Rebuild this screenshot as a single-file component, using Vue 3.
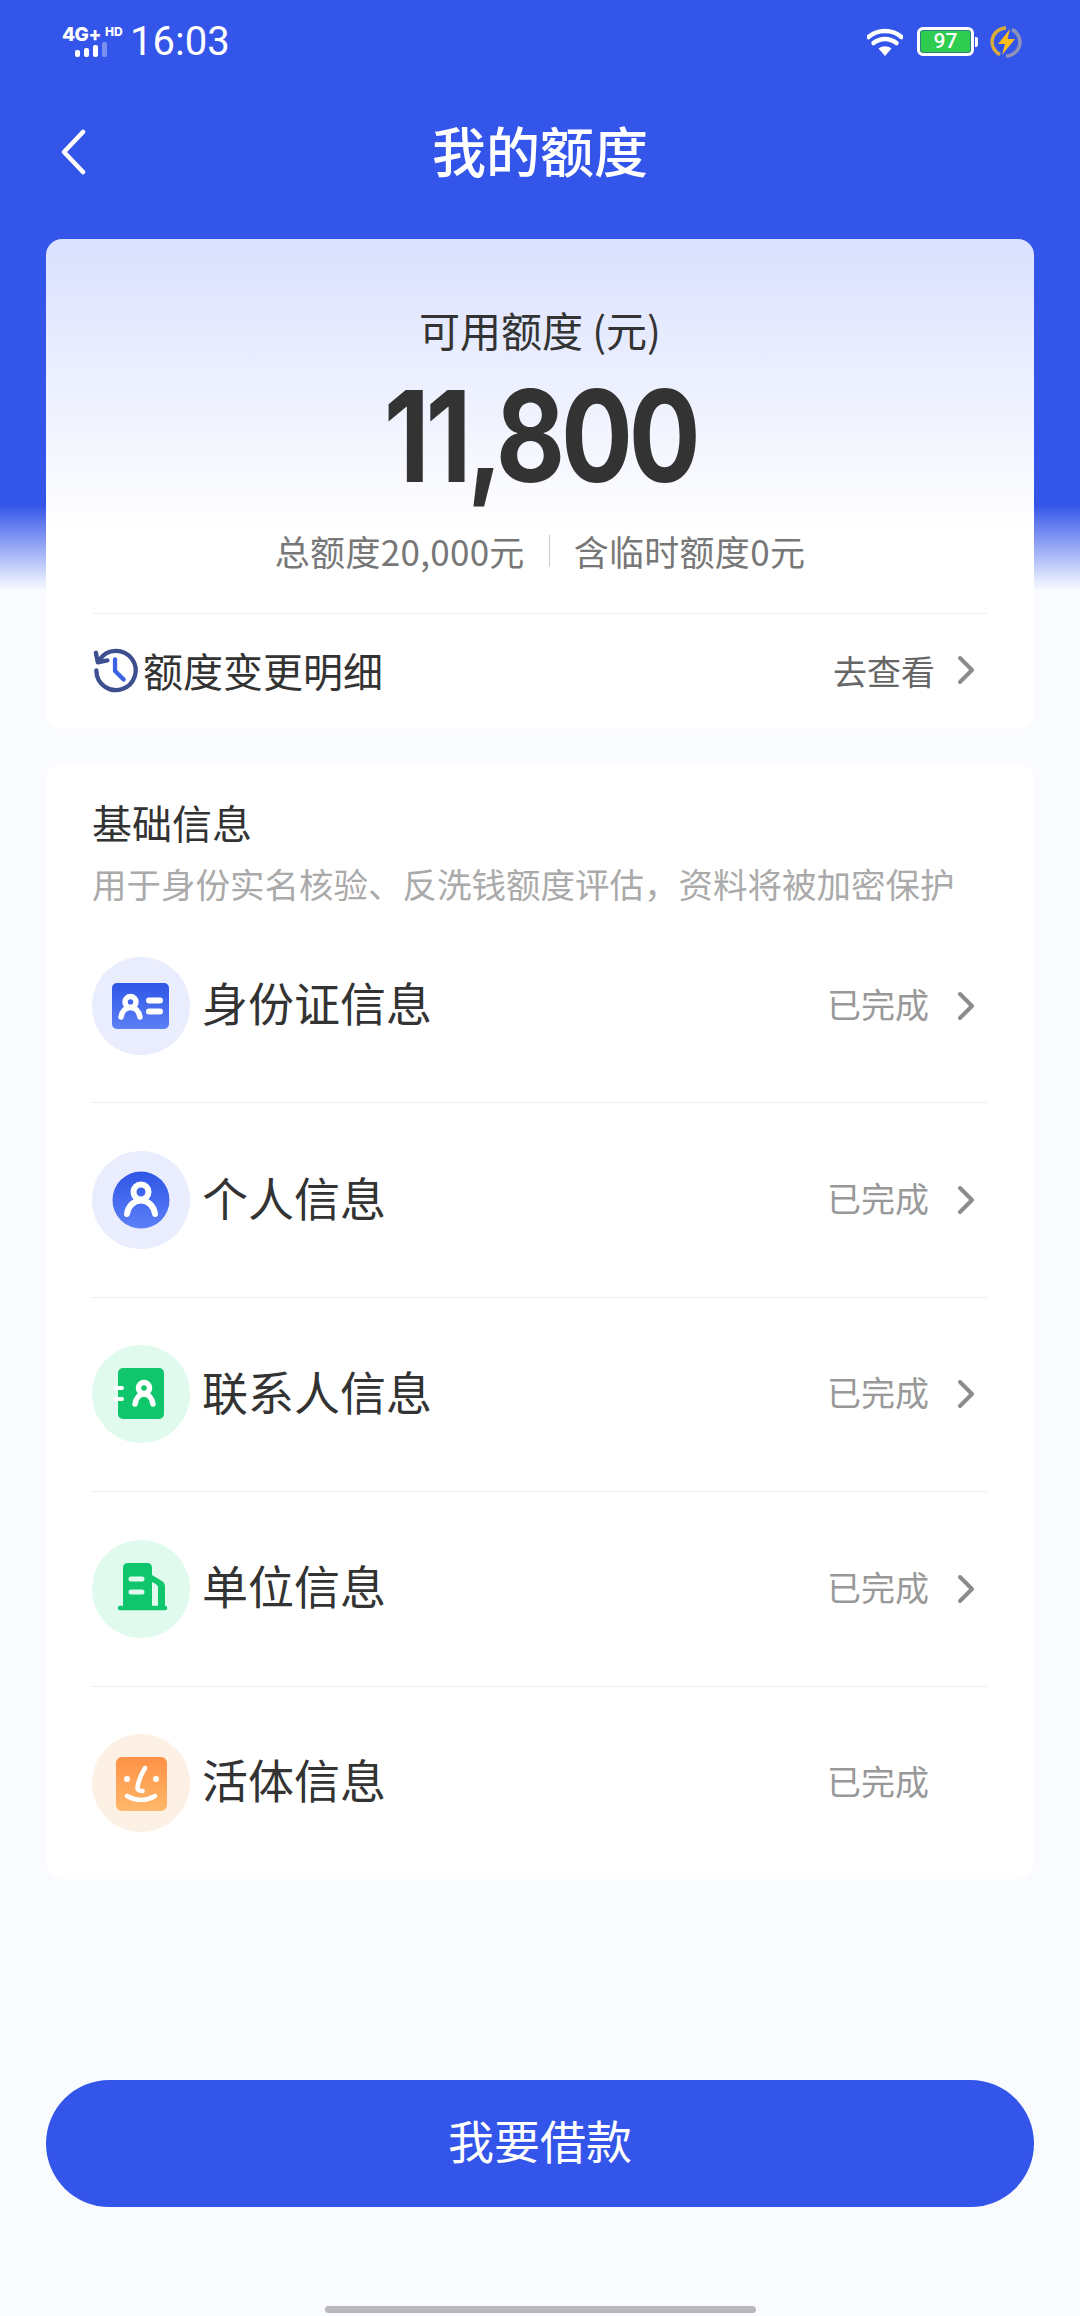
<template>
  <div class="pagina">
    <div class="status-bar">
      <div class="status-esq">
        <div class="sinal">
          <div class="sinal-topo"><span class="rede">4G+</span><span class="hd">HD</span></div>
          <div class="barras">
            <i class="b1"></i><i class="b2"></i><i class="b3"></i><i class="b4"></i>
          </div>
        </div>
        <span class="hora">16:03</span>
      </div>
      <div class="status-dir">
        <svg class="wifi" viewBox="0 0 36 28" width="36" height="28">
          <path d="M1.500 9C10.500 1 25.500 1 34.500 9" fill="none" stroke="#fff" stroke-width="4.500" stroke-linecap="round" />
          <path d="M6.500 15C13.500 9.500 22.500 9.500 29.500 15" fill="none" stroke="#fff" stroke-width="4.500" stroke-linecap="round" />
          <path d="M11.500 20.500C15.500 17.500 20.500 17.500 24.500 20.500L18 28Z" fill="#fff" />
        </svg>
        <div class="bateria"><div class="bateria-corpo">97</div><div class="bateria-ponta"></div></div>
        <svg class="raio" viewBox="0 0 32 32" width="32" height="32">
          <path d="M16 2A14 14 0 0 0 10 28.600" fill="none" stroke="#d9ab3c" stroke-width="3.500" />
          <path d="M22 3.400A14 14 0 0 1 16 30" fill="none" stroke="#8f93b5" stroke-width="3.500" />
          <path d="M20 3L8 18H15L12 29L25 13H17.500Z" fill="#fbbd1c" />
        </svg>
      </div>
    </div>

    <div class="nav">
      <svg class="voltar" viewBox="0 0 26 46" width="26" height="46">
        <path d="M23 3L4 23L23 43" fill="none" stroke="#fff" stroke-width="4.500" stroke-linecap="round" stroke-linejoin="round" />
      </svg>
      <h1>我的额度</h1>
    </div>

    <section class="card card-limite">
      <p class="limite-titulo">可用额度 (元)</p>
      <p class="limite-valor">11,800</p>
      <div class="limite-info">
        <span>总额度20,000元</span>
        <i class="separador"></i>
        <span>含临时额度0元</span>
      </div>
      <div class="detalhe">
        <svg class="historico" viewBox="0 0 48 48" width="46" height="46">
          <path d="M7 13A20.500 20.500 0 1 1 3.500 24.500" fill="none" stroke="#3d4f8f" stroke-width="4.500" stroke-linecap="round" />
          <path d="M3 6L5 16L15 14" fill="none" stroke="#3d4f8f" stroke-width="4.500" stroke-linecap="round" stroke-linejoin="round" />
          <path d="M23 13V25L32 34" fill="none" stroke="#3a62e2" stroke-width="4.500" stroke-linecap="round" stroke-linejoin="round" />
        </svg>
        <span class="detalhe-texto">额度变更明细</span>
        <span class="detalhe-link">去查看</span>
        <svg class="seta" viewBox="0 0 18 30" width="18" height="30">
          <path d="M3 3L15 15L3 27" fill="none" stroke="#8c8c8c" stroke-width="4" stroke-linecap="round" stroke-linejoin="round" />
        </svg>
      </div>
    </section>

    <section class="card card-info">
      <h2>基础信息</h2>
      <p class="sub">用于身份实名核验、反洗钱额度评估，资料将被加密保护</p>
      <div v-for="item in itens" :key="item.nome" class="linha">
        <svg class="icone" viewBox="0 0 98 98" width="98" height="98">
          <circle cx="49" cy="49" r="49" :fill="item.fundo" />
          <template v-if="item.tipo === 'id'">
            <rect x="20" y="26" width="57" height="46" rx="5" fill="url(#azul)" />
            <circle cx="38.500" cy="45" r="5.500" fill="none" stroke="#fff" stroke-width="5.500" />
            <path d="M29 60C30 54 34 50.500 38.500 50.500C43 50.500 47 54 48 60" fill="none" stroke="#fff" stroke-width="5.500" stroke-linecap="round" />
            <path d="M57 43.500H68M57 54.500H68" fill="none" stroke="#fff" stroke-width="6" stroke-linecap="round" />
          </template>
          <template v-else-if="item.tipo === 'pessoa'">
            <circle cx="49" cy="49" r="28.500" fill="url(#azul)" />
            <circle cx="49" cy="41" r="7.500" fill="none" stroke="#fff" stroke-width="6" />
            <path d="M35 63C36 55 42 49.500 49 49.500C56 49.500 62 55 63 63" fill="none" stroke="#fff" stroke-width="6" stroke-linecap="round" />
          </template>
          <template v-else-if="item.tipo === 'contato'">
            <rect x="26" y="23" width="46" height="51" rx="5" fill="#0fc66c" />
            <path d="M23 43H30M23 54H30" fill="none" stroke="#fff" stroke-width="4" stroke-linecap="round" />
            <circle cx="52" cy="43" r="5.500" fill="none" stroke="#fff" stroke-width="5.500" />
            <path d="M43 59C44 53 47.500 49 52 49C56.500 49 60 53 61 59" fill="none" stroke="#fff" stroke-width="5.500" stroke-linecap="round" />
          </template>
          <template v-else-if="item.tipo === 'predio'">
            <path d="M31 28Q31 23 36 23H55Q60 23 60 28V68H31Z" fill="#0fc66c" />
            <path d="M60 35L70 41Q73 43 73 47V68H66V47Q66 45 63 43.500L60 42Z" fill="#0fc66c" />
            <path d="M28 68H73" fill="none" stroke="#0fc66c" stroke-width="4.500" stroke-linecap="round" />
            <path d="M39 39H50M39 52H50" fill="none" stroke="#e0fbee" stroke-width="5" stroke-linecap="round" />
          </template>
          <template v-else>
            <rect x="24" y="23" width="51" height="54" rx="6" fill="url(#laranja)" />
            <circle cx="35" cy="45" r="3" fill="#fff" />
            <circle cx="64" cy="45" r="3" fill="#fff" />
            <path d="M53 34Q47 44 45.500 53Q45 57 50.500 57" fill="none" stroke="#fff" stroke-width="4.500" stroke-linecap="round" />
            <path d="M35 62Q49 70 63 62" fill="none" stroke="#fff" stroke-width="4.500" stroke-linecap="round" />
          </template>
        </svg>
        <span class="linha-nome">{{ item.nome }}</span>
        <span class="linha-status">已完成</span>
        <svg class="seta" :class="{ oculta: !item.seta }" viewBox="0 0 18 30" width="18" height="30">
          <path d="M3 3L15 15L3 27" fill="none" stroke="#8c8c8c" stroke-width="4" stroke-linecap="round" stroke-linejoin="round" />
        </svg>
      </div>
      <svg class="defs" width="0" height="0">
        <defs>
          <linearGradient id="azul" x1="0" y1="0" x2="0" y2="1">
            <stop offset="0" stop-color="#2f55e6" />
            <stop offset="1" stop-color="#5c80f7" />
          </linearGradient>
          <linearGradient id="laranja" x1="0" y1="0" x2="0" y2="1">
            <stop offset="0" stop-color="#ff9146" />
            <stop offset="1" stop-color="#ffb86a" />
          </linearGradient>
        </defs>
      </svg>
    </section>

    <div class="rodape">
      <button class="btn-emprestimo">我要借款</button>
      <div class="home-bar"></div>
    </div>
  </div>
</template>

<script setup>
const itens = [
  { nome: '身份证信息', tipo: 'id', fundo: '#e9edfd', seta: true },
  { nome: '个人信息', tipo: 'pessoa', fundo: '#e9edfd', seta: true },
  { nome: '联系人信息', tipo: 'contato', fundo: '#e0fbee', seta: true },
  { nome: '单位信息', tipo: 'predio', fundo: '#e0fbee', seta: true },
  { nome: '活体信息', tipo: 'rosto', fundo: '#fdf0e4', seta: false }
]
</script>

<style>
html, body { margin: 0; background: #f9fbff; }
</style>

<style scoped>
.pagina {
  width: 1080px;
  height: 2316px;
  display: flex;
  flex-direction: column;
  overflow: hidden;
  background: linear-gradient(#3455e9 0, #3455e9 505px, #f9fbff 590px, #f9fbff 100%);
  font-family: "Noto Sans CJK SC", "Noto Sans", sans-serif;
  color: #333;
}

.status-bar {
  height: 80px;
  padding: 3px 58px 0 62px;
  display: flex;
  justify-content: space-between;
  align-items: center;
  box-sizing: border-box;
  color: white;
}
.status-esq, .status-dir { display: flex; align-items: center; }
.sinal { width: 68px; }
.sinal-topo { display: flex; align-items: flex-start; height: 15px; font-family: Inter, sans-serif; font-weight: 800; }
.rede { font-size: 19px; line-height: 15px; letter-spacing: -0.5px; }
.hd { font-size: 12px; line-height: 10px; margin-left: 4px; }
.barras { display: flex; align-items: flex-end; gap: 4px; height: 15px; margin: 0 0 0 13px; }
.barras i { display: block; width: 5px; background: white; border-radius: 2px; }
.barras .b1 { height: 7px; }
.barras .b2 { height: 9px; }
.barras .b3 { height: 12px; }
.barras .b4 { height: 15px; background: rgba(255, 255, 255, 0.35); }
.hora { font-family: Roboto, sans-serif; font-size: 40px; line-height: 40px; }
.wifi { margin-right: 14px; }
.bateria { display: flex; align-items: center; margin-right: 12px; }
.bateria-corpo {
  width: 57px;
  height: 29px;
  box-sizing: border-box;
  border: 3px solid white;
  border-radius: 6px;
  background: #2ecc4f;
  box-shadow: inset 0 0 0 1px #2f7f80;
  text-align: center;
  font-family: Roboto, sans-serif;
  font-size: 21px;
  line-height: 23px;
  font-weight: 500;
}
.bateria-ponta { width: 3px; height: 10px; background: white; border-radius: 0 2px 2px 0; margin-left: 1px; }

.nav {
  height: 144px;
  display: flex;
  align-items: center;
  justify-content: center;
  position: relative;
}
.voltar { position: absolute; left: 60px; top: 49px; }
h1 { margin: 0 0 6px; font-size: 54px; font-weight: 500; color: white; }

.card {
  margin: 0 46px;
  border-radius: 16px;
  background: white;
}

.card-limite {
  margin-top: 15px;
  height: 490px;
  box-sizing: border-box;
  padding: 0 47px;
  display: flex;
  flex-direction: column;
  align-items: center;
  background: linear-gradient(#dae1fe, #ffffff 60%);
}
.limite-titulo { margin: 62px 0 0; font-size: 41px; line-height: 56px; color: #333; }
.limite-valor {
  margin: 16px 0 0;
  font-family: Inter, sans-serif;
  font-size: 127px;
  font-weight: 700;
  line-height: 126px;
  letter-spacing: -5px;
  color: #333;
  transform: scaleX(0.84);
}
.limite-info {
  margin-top: 27px;
  display: flex;
  align-items: center;
  font-size: 35px;
  line-height: 50px;
  letter-spacing: 0.3px;
  color: #777;
}
.separador { width: 1px; height: 32px; margin: 0 24px; background: #c8c8c8; }
.detalhe {
  margin-top: 37px;
  align-self: stretch;
  height: 112px;
  border-top: 1px solid #eee;
  display: flex;
  align-items: center;
}
.historico { margin-right: 4px; flex: none; }
.detalhe-texto { flex: 1; font-size: 40px; color: #333; }
.detalhe-link { font-size: 34px; color: #666; margin-right: -6px; }

.seta { margin-left: 28px; margin-right: 12px; flex: none; }
.seta.oculta { visibility: hidden; }

.card-info { margin-top: 35px; padding: 0 47px 0 46px; }
h2 { margin: 0; padding-top: 29px; font-size: 40px; font-weight: 400; line-height: 58px; color: #333; }
.sub { margin: 7px 0 0; font-size: 34.500px; line-height: 51px; color: #aaa; white-space: nowrap; }
.linha {
  height: 194.400px;
  display: flex;
  align-items: center;
  border-bottom: 1px solid #eee;
  box-sizing: border-box;
}
.linha:last-of-type { border-bottom: none; height: 192px; }
.icone { flex: none; margin-right: 12px; }
.linha-nome { flex: 1; font-size: 46px; color: #333; margin-bottom: 9px; }
.linha-status { font-size: 34px; color: #999; margin-bottom: 5px; }
.defs { position: absolute; }

.rodape {
  margin-top: auto;
  padding: 0 46px;
  display: flex;
  flex-direction: column;
  align-items: center;
}
.btn-emprestimo {
  width: 100%;
  height: 127px;
  padding: 0 0 10px;
  border: none;
  border-radius: 64px;
  background: #3455e9;
  color: white;
  font-family: inherit;
  font-size: 46px;
  font-weight: 400;
}
.home-bar { width: 431px; height: 7px; margin: 99px 0 3px; border-radius: 4px; background: #b9b9bc; }
</style>
